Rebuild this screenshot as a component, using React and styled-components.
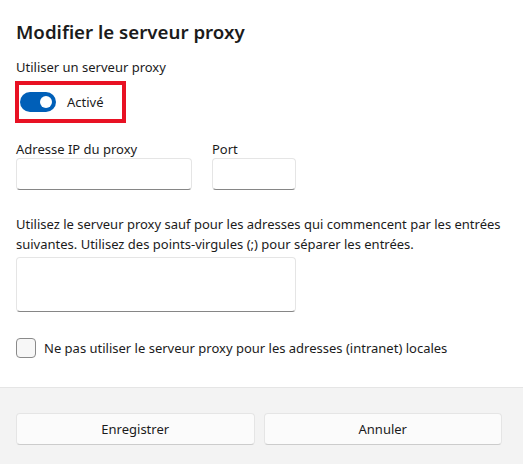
import * as React from 'react';
import { useState } from 'react';
import styled, { createGlobalStyle, css } from 'styled-components';

const GlobalStyle = createGlobalStyle`
  html, body {
    margin: 0;
    padding: 0;
    background: #ffffff;
  }
  body {
    font-family: "Segoe UI", "Noto Sans", sans-serif;
    color: #1b1b1b;
  }
`;

const Dialog = styled.div`
  width: 523px;
  height: 464px;
  display: flex;
  flex-direction: column;
  background: #ffffff;
  overflow: hidden;
`;

const Content = styled.div`
  flex: 1;
  padding: 18px 16px 0 16px;
  display: flex;
  flex-direction: column;
`;

const Title = styled.h1`
  margin: 0;
  font-size: 18.7px;
  line-height: 28px;
  font-weight: 600;
  color: #1b1b1b;
`;

const Label = styled.div`
  font-size: 13px;
  line-height: ${p => p.$lh || 20}px;
  color: #1b1b1b;
  margin-top: ${p => p.$top || 0}px;
`;

const Highlight = styled.div`
  align-self: flex-start;
  margin-top: 4px;
  margin-left: -1px;
  width: 111px;
  height: 42px;
  box-sizing: border-box;
  border: 4px solid #e81123;
  display: flex;
  align-items: center;
  padding-left: 1px;
  gap: 11px;
`;

const Track = styled.button`
  width: 36px;
  height: 20px;
  border-radius: 10px;
  border: none;
  padding: 0;
  cursor: pointer;
  position: relative;
  flex-shrink: 0;
  background: #005fb8;
  ${p =>
    !p.$on &&
    css`
      background: #f6f6f6;
      border: 1px solid #8a8a8a;
    `}
`;

const Knob = styled.span`
  position: absolute;
  border-radius: 50%;
  top: ${p => (p.$on ? '4px' : '5px')};
  background: ${p => (p.$on ? '#ffffff' : '#5d5d5d')};
  left: ${p => (p.$on ? '20px' : '4px')};
  width: ${p => (p.$on ? '12px' : '10px')};
  height: ${p => (p.$on ? '12px' : '10px')};
`;

const ToggleText = styled.span`
  font-size: 13px;
  color: #1b1b1b;
`;

const Fields = styled.div`
  display: flex;
  gap: 20px;
  margin-top: 18px;
`;

const Field = styled.div`
  display: flex;
  flex-direction: column;
`;

const Input = styled.input`
  box-sizing: border-box;
  width: ${p => p.$w}px;
  height: 32px;
  border: 1px solid #e5e5e5;
  border-bottom: 1px solid #868686;
  border-radius: 4px;
  background: #ffffff;
  font-family: inherit;
  font-size: 13px;
  padding: 0 10px;
  outline: none;
`;

const Paragraph = styled.p`
  margin: 24px 0 0 0;
  font-size: 13px;
  line-height: 20px;
  color: #1b1b1b;
`;

const TextArea = styled.textarea`
  box-sizing: border-box;
  display: block;
  width: 280px;
  height: 55px;
  margin-top: 3px;
  border: 1px solid #e5e5e5;
  border-bottom: 1px solid #868686;
  border-radius: 4px;
  resize: none;
  font-family: inherit;
  font-size: 13px;
  outline: none;
`;

const CheckRow = styled.label`
  display: flex;
  align-items: center;
  gap: 8px;
  margin-top: 26px;
  font-size: 13px;
  line-height: 20px;
  color: #1b1b1b;
  cursor: pointer;
`;

const Box = styled.span`
  box-sizing: border-box;
  width: 20px;
  height: 20px;
  border-radius: 4px;
  border: 1px solid #8a8a8a;
  background: #f7f7f7;
  flex-shrink: 0;
`;

const Footer = styled.div`
  height: 77px;
  box-sizing: border-box;
  border-top: 1px solid #e5e5e5;
  background: #f3f3f3;
  padding: 25px 21px 0 16px;
  display: flex;
  gap: 9px;
`;

const Button = styled.button`
  flex: 1;
  height: 32px;
  box-sizing: border-box;
  border: 1px solid #e5e5e5;
  border-bottom-color: #cccccc;
  border-radius: 4px;
  background: #fbfbfb;
  font-family: inherit;
  font-size: 13px;
  color: #1b1b1b;
  cursor: pointer;
`;

export default function App() {
  const [on, setOn] = useState(true);
  const [local, setLocal] = useState(false);

  return (
    <Dialog>
      <GlobalStyle />
      <Content>
        <Title>Modifier le serveur proxy</Title>
        <Label $top={11}>Utiliser un serveur proxy</Label>
        <Highlight>
          <Track $on={on} onClick={() => setOn(!on)}>
            <Knob $on={on} />
          </Track>
          <ToggleText>{on ? 'Activé' : 'Désactivé'}</ToggleText>
        </Highlight>
        <Fields>
          <Field>
            <Label $lh={17}>Adresse IP du proxy</Label>
            <Input $w={176} />
          </Field>
          <Field>
            <Label $lh={17}>Port</Label>
            <Input $w={84} />
          </Field>
        </Fields>
        <Paragraph>
          Utilisez le serveur proxy sauf pour les adresses qui commencent par les entrées
          <br />
          suivantes. Utilisez des points-virgules (;) pour séparer les entrées.
        </Paragraph>
        <TextArea />
        <CheckRow onClick={() => setLocal(!local)}>
          <Box />
          Ne pas utiliser le serveur proxy pour les adresses (intranet) locales
        </CheckRow>
      </Content>
      <Footer>
        <Button>Enregistrer</Button>
        <Button>Annuler</Button>
      </Footer>
    </Dialog>
  );
}
